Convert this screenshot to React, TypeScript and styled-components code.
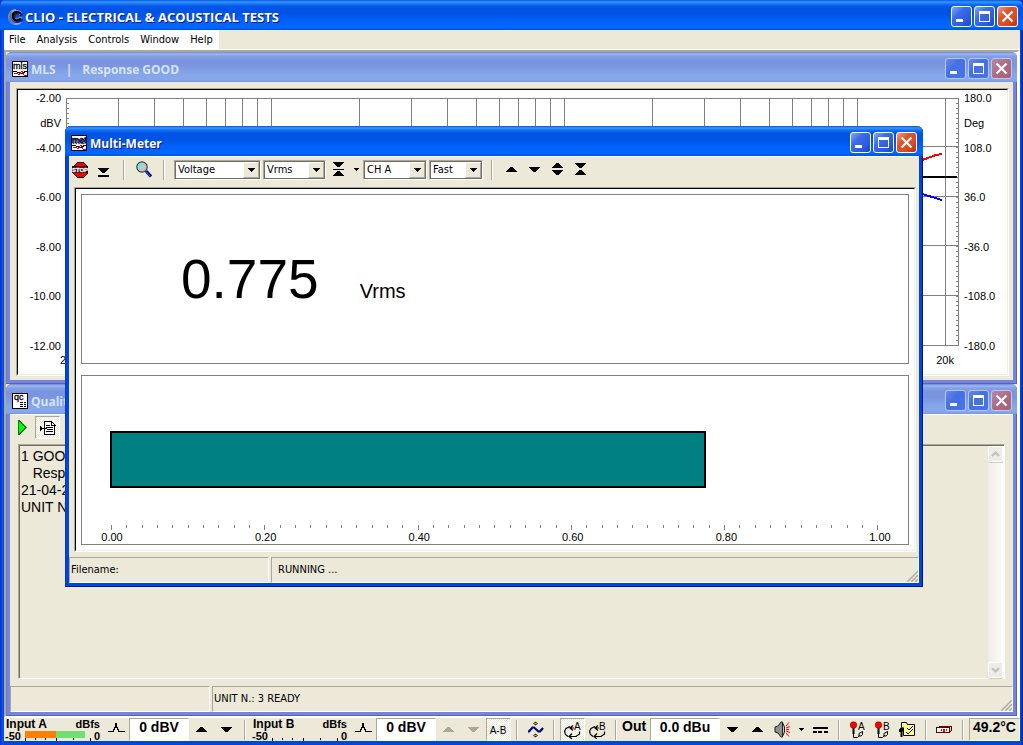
import React from "react";
import styled, { createGlobalStyle, css } from "styled-components";

const UI = `"DejaVu Sans Condensed", "Liberation Sans", sans-serif`;
const ARIAL = `"Liberation Sans", Arial, sans-serif`;
const TITLE = `"Open Sans", "Noto Sans", sans-serif`;
const FACE = "#ece9d8";
const SHADOW = "#aca899";

const Global = createGlobalStyle`
  *, *::before, *::after { box-sizing: border-box; }
  body { margin: 0; background: #0831d9; font: 11px/14px ${UI}; color: #000; }
  button, select, input, textarea { font: inherit; color: inherit; margin: 0; border-radius: 0; }
  svg { display: block; }
`;

/* ---------- window chrome ---------- */

const activeBar = css`
  background: linear-gradient(180deg, #0058e6 0, #3a95ff 2px, #1672f4 4px, #0054e6 7px, #0054e3 14px, #0062fb 21px, #0068ff 27px, #0054e0 30px);
  color: #fff;
  text-shadow: 1px 1px #0a1883;
`;
const inactiveBar = css`
  background: linear-gradient(180deg, #6f87d8 0, #9db9f0 2px, #84a0e6 4px, #7a94de 8px, #7b96e0 14px, #85a6ea 22px, #86a8ea 28px, #7b93e0 30px);
  color: #d8e4f8;
`;

const AppFrame = styled.main`
  display: flex;
  flex-direction: column;
  min-height: 100vh;
  min-width: 1000px;
  padding: 0 3px 4px 4px;
  background: linear-gradient(90deg, #0831d9 0, #0831d9 1px, #0855dd 2px, #0855e8 3px, #0046d8 4px, #0046d8 calc(100% - 2px), #001ea0 100%);
`;

const MdiFrame = styled.section<{ $active?: boolean; $grow?: boolean }>`
  display: flex;
  flex-direction: column;
  flex: ${(p) => (p.$grow ? "1" : "none")};
  padding: 0 4px 4px;
  border-radius: 6px 6px 0 0;
  background: ${(p) => (p.$active ? "#0046d8" : "#7585dc")};
  box-shadow: inset ${(p) => (p.$active ? "-1px -1px #00138c, inset 1px 0 #0831d9" : "-1px -1px #5a60c0, inset 1px 0 #6a78d0")};
`;

const FloatingFrame = styled(MdiFrame)`
  position: absolute;
  top: 74px;
  left: 59px;
  right: 94px;
`;

const Bar = styled.header<{ $active?: boolean; $main?: boolean }>`
  display: flex;
  align-items: center;
  gap: ${(p) => (p.$main ? "2px" : "3px")};
  height: 30px;
  margin: 0 ${(p) => (p.$main ? "-3px 0 -4px" : "-4px")};
  padding: 3px ${(p) => (p.$active && !p.$main ? "6px" : "5px")} 0 ${(p) => (p.$main ? "7px" : "6px")};
  border-radius: 6px 6px 0 0;
  ${(p) => (p.$active ? activeBar : inactiveBar)}
`;

const TitleText = styled.h1<{ $main?: boolean }>`
  display: flex;
  flex: 1;
  gap: 10px;
  margin: 0;
  padding-top: ${(p) => (p.$main ? 0 : 2)}px;
  font: 700 ${(p) => (p.$main ? 13 : 12)}px/18px ${TITLE};
  white-space: nowrap;
`;

const Captions = styled.div`
  display: flex;
  gap: 2px;
`;

const CaptionButton = styled.button<{ $close?: boolean; $active?: boolean }>`
  width: 21px;
  height: 21px;
  padding: 0;
  border: 1px solid ${(p) => (p.$active ? "#fff" : "#b9c8f2")};
  border-radius: 3px;
  background: ${(p) =>
    p.$close
      ? p.$active
        ? "linear-gradient(135deg, #f0a088 0, #e0532c 35%, #dc4a20 70%, #b83010 100%)"
        : "linear-gradient(135deg, #b888a8 0, #b06a80 50%, #a86078 100%)"
      : p.$active
        ? "linear-gradient(135deg, #86a8f4 0, #3c6ce8 35%, #2c5ce0 70%, #1c48c8 100%)"
        : "linear-gradient(135deg, #6a88e8 0, #4470e4 40%, #4474ec 100%)"};
`;

function CaptionButtons({ active }: { active?: boolean }) {
  return (
    <Captions>
      <CaptionButton $active={active} aria-label="Minimize">
        <svg width="19" height="19" shapeRendering="crispEdges"><path d="M4 12h7v3H4z" fill="#fff" /></svg>
      </CaptionButton>
      <CaptionButton $active={active} aria-label="Maximize">
        <svg width="19" height="19" shapeRendering="crispEdges"><path d="M4 4h11v11H4zM5 7v7h9V7z" fill="#fff" fillRule="evenodd" /></svg>
      </CaptionButton>
      <CaptionButton $close $active={active} aria-label="Close">
        <svg width="19" height="19"><path d="M4.500 4.500l10 10M14.500 4.500l-10 10" stroke="#fff" strokeWidth="2.200" /></svg>
      </CaptionButton>
    </Captions>
  );
}

/* ---------- menu ---------- */

const MenuStrip = styled.nav`
  display: flex;
  height: 20px;
  background: ${FACE};
  border-bottom: 1px solid #fff;
`;
const MenuItems = styled.div`
  display: flex;
  background: #fff;
`;
const MenuButton = styled.button`
  padding: 1px 6px 0 5px;
  border: 0;
  background: none;
`;

/* ---------- shared pieces ---------- */

const Desktop = styled.div`
  position: relative;
  display: flex;
  flex: 1;
  flex-direction: column;
  border: 1px solid;
  border-color: ${SHADOW} #fff #fff ${SHADOW};
  border-width: 2px 3px 1px 2px;
  background: ${FACE};
`;

const Client = styled.div<{ $line?: boolean }>`
  display: flex;
  flex: 1;
  flex-direction: column;
  background: ${FACE};
  border-top: ${(p) => (p.$line ? "1px solid #fff" : "0")};
`;

const Sunken = styled.div<{ $m: string }>`
  flex: 1;
  margin: ${(p) => p.$m};
  border: 1px solid;
  border-color: ${SHADOW} #fff #fff ${SHADOW};
  background: #fff;
`;
const SunkenInner = styled.div`
  height: 100%;
  border: 1px solid;
  border-color: #000 #f1efe2 #f1efe2 #000;
`;

const StatusRow = styled.footer`
  display: grid;
  grid-template-columns: 200px 1fr;
  grid-template-rows: 26px;
  gap: 2px;
`;
const StatusCell = styled.div<{ $pad?: number }>`
  position: relative;
  padding: 0 ${(p) => p.$pad ?? 1}px;
  border: 1px solid;
  border-color: ${SHADOW} #fff #fff ${SHADOW};
  line-height: 24px;
`;
const GripBox = styled.div`
  position: absolute;
  right: 0;
  bottom: 0;
`;
const Grip = () => (
  <GripBox>
    <svg width="12" height="12">
      <path d="M0 12L12 0M4 12L12 4M8 12L12 8" stroke="#fff" />
      <path d="M1 12L12 1M5 12L12 5M9 12L12 9" stroke="#aca899" strokeWidth="1.500" />
    </svg>
  </GripBox>
);

const Separator = styled.span`
  flex: none;
  width: 2px;
  height: 20px;
  margin: 0 5px;
  border-left: 1px solid ${SHADOW};
  border-right: 1px solid #fff;
`;

const ToolButton = styled.button<{ $w?: number; $pressed?: boolean }>`
  display: flex;
  flex: none;
  align-items: center;
  justify-content: center;
  width: ${(p) => p.$w ?? 25}px;
  height: 23px;
  padding: 0;
  border: 1px solid transparent;
  background: none;
  ${(p) =>
    p.$pressed &&
    css`
      border-color: ${SHADOW} #fff #fff ${SHADOW};
      background: repeating-conic-gradient(#fff 0 25%, ${FACE} 0 50%) 0 0 / 2px 2px;
    `}
`;

/* ---------- icons ---------- */

type IconProps = { w?: number; h?: number; children: React.ReactNode };
const Icon = ({ w = 16, h = 16, children }: IconProps) => (
  <svg width={w} height={h} viewBox={`0 0 ${w} ${h}`} shapeRendering="crispEdges" aria-hidden="true">
    {children}
  </svg>
);

const upPath = "h3v1h1v1h1v1h1v1h1v1h-11v-1h1v-1h1v-1h1v-1h1z";
const downPath = "h11v1h-1v1h-1v1h-1v1h-1v1h-3v-1h-1v-1h-1v-1h-1v-1h-1z";

const Up = ({ color = "#000" }: { color?: string }) => <Icon w={11} h={5}><path d={`M4 0${upPath}`} fill={color} /></Icon>;
const Down = ({ color = "#000" }: { color?: string }) => <Icon w={11} h={5}><path d={`M0 0${downPath}`} fill={color} /></Icon>;
const SmallDown = () => <Icon w={5} h={3}><path d="M0 0h5v1H4v1H3v1H2V2H1V1H0z" /></Icon>;
const Spread = () => <Icon w={11} h={13}><path d={`M4 0${upPath}M0 7${downPath}`} /></Icon>;
const Squeeze = () => <Icon w={11} h={13}><path d={`M0 0${downPath}M4 7${upPath}`} /></Icon>;
const Fit = () => <Icon w={11} h={15}><path d={`M0 0${downPath}M0 7h11v1H0zM4 9${upPath}`} /></Icon>;
const DropBar = () => <Icon w={11} h={14}><path d={`M0 5${downPath}M0 12h11v2H0z`} /></Icon>;

const Stop = () => (
  <Icon>
    <path d="M5 0h6l5 5v6l-5 5H5l-5-5V5z" fill="#000" />
    <path d="M5 1h6l4 4v6l-4 4H5l-4-4V5z" fill="#f00" />
    <path d="M0 4h16v7H0z" fill="#300000" />
    <text x="8" y="10" textAnchor="middle" fontSize="6" fontWeight="700" fontFamily={ARIAL} fill="#fff" stroke="#fff" strokeWidth="0.300">STOP</text>
  </Icon>
);
const Magnifier = () => (
  <svg width="16" height="17" viewBox="0 0 16 17" aria-hidden="true">
    <path d="M10 10l5 5.500" stroke="#000080" strokeWidth="3" />
    <path d="M10 10.500l4 4.500" stroke="#4a6ee0" strokeWidth="1" />
    <circle cx="6" cy="6" r="5.200" fill="#c0c8cc" stroke="#404040" strokeWidth="1.200" />
    <path d="M3 6c0-2 1-3 3-3" stroke="#3ff" strokeWidth="2" fill="none" />
  </svg>
);
const Logo = () => (
  <svg width="16" height="18" viewBox="0 0 16 18" aria-hidden="true">
    <path d="M9 2a7 7 0 1 0 5 12" stroke="#8aa8d8" strokeWidth="2" fill="none" />
    <path d="M5 4a7 7 0 0 0 2 12" stroke="#5a7ab8" strokeWidth="2" fill="none" />
    <text x="4" y="13" fontSize="15" fontWeight="700" fontFamily={ARIAL} stroke="#b0a070" strokeWidth="1.500" paintOrder="stroke">C</text>
  </svg>
);
const Frame16 = () => (
  <>
    <path d="M0 0h16v16H0z" />
    <path d="M1 1h14v14H1z" fill="#fff" />
  </>
);
const ModuleIcon = ({ label }: { label: string }) => (
  <Icon>
    <Frame16 />
    <text x="8" y="8" textAnchor="middle" fontSize="9" fontFamily={ARIAL} stroke="#000" strokeWidth="0.300">{label}</text>
    <path d="M1 10h4v1h3v1h2v-1h2v-1h3v1h-2v1h-2v1H8v-1H5v-1H1z" />
    <path d="M2 12h3l2 2 3-4 2 4h3" fill="none" stroke="#e00000" />
  </Icon>
);
const QcIcon = () => (
  <Icon>
    <Frame16 />
    <text x="2" y="7" fontSize="9" fontFamily={ARIAL} stroke="#000" strokeWidth="0.300">qc</text>
    <path d="M8 9h3v1H8zM12 9h2v1h-2zM8 11h3v1H8zM12 11h2v1h-2zM8 13h3v1H8zM12 13h2v1h-2z" />
  </Icon>
);
const Play = () => (
  <Icon w={9} h={15}><path d="M0 0h1l8 7v1l-8 7H0z" fill="#008000" /><path d="M1 2l6 5v1l-6 5z" fill="#0f0" /></Icon>
);
const Report = () => (
  <Icon>
    <path d="M4.500 1.500h7l3 3v10h-10z" fill="#fff" stroke="#000" />
    <path d="M11.500 1v4h4M6 5.500h4M6 7.500h7M7 9.500h6M6 11.500h7" fill="none" stroke="#000" />
    <path d="M0 6h1v1h1v1h5v1H2v1H1v1H0z" />
  </Icon>
);
const Peak = () => (
  <Icon w={17} h={16}><path d="M0 9.500h5.500V7.500h1V5.500h1V1M8.500 1v4.500h1v2h1v2H17" fill="none" stroke="#000" /></Icon>
);
const Diff = () => (
  <Icon w={19} h={10}><text x="9" y="9" textAnchor="middle" fontSize="10" fontFamily={ARIAL}>A-B</text></Icon>
);
const Wave = () => (
  <svg width="17" height="17" viewBox="0 0 17 17" aria-hidden="true">
    <path d="M1 10.500h1l3.500-4h1.500l4.500 4h1.500L16 7" fill="none" stroke="#000080" strokeWidth="2.200" />
    <path d="M8.500 0.500l2.500 2-2.500 2-2.500-2zM8.500 12.500l2.500 2-2.500 2-2.500-2z" fill="#303010" />
    <path d="M7.500 2.500h2M7.500 14.500h2" stroke="#e0d020" />
  </svg>
);
const Loop = ({ label }: { label: string }) => (
  <svg width="18" height="18" viewBox="0 0 18 18" aria-hidden="true">
    <path d="M9 4.500L6 7l3 2.500M6 7h4M6 5.500l-4 2-1.500 3 1 3L4 15.500M8 12.500l-3 3 3 2.500M5 15.500h7l3.500-2.500v-2.500" fill="none" stroke="#000" strokeWidth="1.200" />
    <text x="10" y="9" fontSize="10" fontFamily={ARIAL}>{label}</text>
  </svg>
);
const Speaker = () => (
  <svg width="17" height="17" viewBox="0 0 17 17" aria-hidden="true">
    <path d="M1 6l3-1 3-4h1.500v15H7L4 12l-3-1z" fill="#909090" stroke="#202020" />
    <path d="M8.500 1.500l2 4.500v5l-2 4.500z" fill="#c8c8c8" stroke="#202020" />
    <path d="M12 5l3-3.500M12 7l4-1.500M12 8.500h3M12 10l4 1.500M12 12l3 3.500" stroke="#f00" />
  </svg>
);
const Dc = () => <Icon w={15} h={6}><path d="M0 0h15v2H0zM0 4h4v2H0zM5 4h4v2H5zM11 4h4v2h-4z" /></Icon>;
const Mic = ({ label }: { label: string }) => (
  <svg width="17" height="18" viewBox="0 0 17 18" aria-hidden="true">
    <path d="M4.500 7v9.500h4l2-2M10 12.500l3.500-2v3l-1.500 1.500h-2z" fill="none" stroke="#000" />
    <path d="M3.500 7h2v6h-2z" />
    <circle cx="4.500" cy="4" r="3.300" fill="#f00" stroke="#700000" strokeWidth="0.500" />
    <text x="9" y="9" fontSize="10" fontFamily={ARIAL}>{label}</text>
  </svg>
);
const Settings = () => (
  <svg width="17" height="17" viewBox="0 0 17 17" aria-hidden="true">
    <path d="M2.500 6V1.500h5l1 2h7v11h-11V9z" fill="#ffff90" stroke="#000" />
    <path d="M8 7l2 2 4-4M7 11l2 2 5-5" fill="none" stroke="#000" />
    <path d="M0 8.500l2-2h3v4H3.500V16H1.500v-5H0z" />
  </svg>
);
const Device = () => (
  <Icon w={17} h={9}>
    <path d="M2.500 1.500h13v4l-2 2" fill="#d8c898" stroke="#600" />
    <path d="M0.500 2.500h13v5h-13z" fill="#fff" stroke="#600" />
    <path d="M5 4h1v2H5zM7 4h2v3H7zM10 4h1v2h-1z" fill="#e00000" />
  </Icon>
);

/* ---------- MLS chart ---------- */

const Plot = styled.div`
  display: grid;
  grid-template-columns: 48px 1fr 48px;
  height: 284px;
  font: 11px/14px ${ARIAL};
`;
const Scale = styled.div<{ $side: "left" | "right" }>`
  display: grid;
  grid-template-rows: repeat(11, 1fr);
  align-items: center;
  height: 272px;
  margin-top: -4px;
  padding: ${(p) => (p.$side === "left" ? "0 5px 0 0" : "0 0 0 5px")};
  text-align: ${(p) => (p.$side === "left" ? "right" : "left")};
`;
const PlotArea = styled.div`
  padding-top: 8px;
  svg { width: 100%; height: 248px; }
`;
const Frequencies = styled.div`
  display: flex;
  justify-content: space-between;
  margin: 7px 5px 0 -6px;
`;

const lines = [30, 40, 50, 60, 70, 80, 90, 100, 200, 300, 400, 500, 600, 700, 800, 900, 1000, 2000, 3000, 4000, 5000, 6000, 7000, 8000, 9000, 10000, 20000];
const freqX = (f: number) => Math.round(Math.log10(f / 20) * 293) + 0.5;

function MlsChart() {
  return (
    <Plot>
      <Scale $side="left">
        {["-2.00", "dBV", "-4.00", "", "-6.00", "", "-8.00", "", "-10.00", "", "-12.00"].map((t, i) => <span key={i}>{t}</span>)}
      </Scale>
      <PlotArea>
        <svg viewBox="0 0 893 248" preserveAspectRatio="none" shapeRendering="crispEdges" role="img" aria-label="Frequency response">
          <g stroke="#808080" fill="none">
            <path d="M0.500 0.500H892.500V247.500H0.500z" />
            {lines.map((f) => <path key={f} d={`M${freqX(f)} 0V248`} />)}
            {[1, 2, 3, 4].map((n) => <path key={n} d={`M0 ${Math.round(n * 49.4) - 0.5}H893`} />)}
            {Array.from({ length: 49 }, (_, n) => {
              const y = Math.round((n + 1) * 4.94) + 0.5;
              return <path key={n} d={`M0 ${y}h3M890 ${y}h3`} />;
            })}
          </g>
          <g fill="none" strokeWidth="2">
            <path d="M0 79H891" stroke="#000" />
            <path d="M600 90L856 62L862 60L870 57L876 56" stroke="#f00" />
            <path d="M600 70L856 96L866 99L876 102" stroke="#00f" />
          </g>
        </svg>
        <Frequencies><span>20</span><span>20k</span></Frequencies>
      </PlotArea>
      <Scale $side="right">
        {["180.0", "Deg", "108.0", "", "36.0", "", "-36.0", "", "-108.0", "", "-180.0"].map((t, i) => <span key={i}>{t}</span>)}
      </Scale>
    </Plot>
  );
}

/* ---------- Quality control ---------- */

const QcTools = styled.div`
  display: flex;
  align-items: flex-start;
  height: 29px;
  padding-top: 1px;
`;
const Memo = styled.div`
  display: flex;
  flex: 1;
  margin: 0 8px 7px 8px;
  border: 1px solid;
  border-color: ${SHADOW} #fff #fff ${SHADOW};
  box-shadow: inset 1px 1px #716f64;
`;
const MemoText = styled.textarea`
  flex: 1;
  padding: 3px 2px;
  border: 0;
  outline: 0;
  resize: none;
  overflow: hidden;
  background: none;
  font: 14px/17px ${ARIAL};
`;
const ScrollTrack = styled.div`
  display: flex;
  flex-direction: column;
  justify-content: space-between;
  width: 16px;
  margin: 1px 0 0;
  background: linear-gradient(90deg, #f0eee4, #fdfdfa);
`;
const ScrollButton = styled.button`
  display: flex;
  align-items: center;
  justify-content: center;
  width: 15px;
  height: 16px;
  padding: 0;
  border: 1px solid #fff;
  border-radius: 2px;
  background: #eeede5;
  box-shadow: 0 1px #d0cdbd;
`;
const Chevron = ({ d }: { d: string }) => (
  <svg width="9" height="6"><path d={d} fill="none" stroke="#c0bfb8" strokeWidth="2" /></svg>
);

/* ---------- Multi-Meter ---------- */

const MeterTools = styled.div`
  display: flex;
  align-items: center;
  height: 30px;
  padding: 0 0 5px;
`;
const Combo = styled.label<{ $w: number }>`
  position: relative;
  display: block;
  width: ${(p) => p.$w}px;
  height: 20px;
  margin-right: 2px;
  border: 1px solid;
  border-color: ${SHADOW} #fff #fff ${SHADOW};
  background: #fff;
  box-shadow: inset 1px 1px #716f64, inset -1px -1px #716f64;
  select {
    width: 100%;
    height: 18px;
    padding: 0 0 0 3px;
    border: 0;
    outline: 0;
    appearance: none;
    background: none;
  }
`;
const ComboArrow = styled.span`
  position: absolute;
  top: 1px;
  right: 1px;
  display: flex;
  align-items: center;
  justify-content: center;
  width: 16px;
  height: 16px;
  border: 1px solid;
  border-color: #fff ${SHADOW} ${SHADOW} #fff;
  background: ${FACE};
  pointer-events: none;
`;
const Gap = styled.span<{ $w: number }>`
  width: ${(p) => p.$w}px;
`;

function ComboBox({ label, value, w }: { label: string; value: string; w: number }) {
  return (
    <Combo $w={w}>
      <select aria-label={label} defaultValue={value}><option>{value}</option></select>
      <ComboArrow><Icon w={7} h={4}><path d="M0 0h7v1H6v1H5v1H4v1H3V3H2V2H1V1H0z" /></Icon></ComboArrow>
    </Combo>
  );
}

const Readouts = styled.div`
  display: grid;
  gap: 11px;
  padding: 5px;
`;
const Panel = styled.div`
  height: 170px;
  border: 1px solid #808080;
`;
const NumberPanel = styled(Panel)`
  display: flex;
  align-items: baseline;
  padding: 52px 0 0 99px;
  font-family: ${ARIAL};
`;
const Reading = styled.span`
  font-size: 55px;
  line-height: 64px;
`;
const Unit = styled.span`
  margin-left: 41px;
  font-size: 20px;
`;
const GaugePanel = styled(Panel)`
  padding: 55px 29px 0 28px;
`;
const GaugeBar = styled.div`
  height: 57px;
  border: 2px solid #000;
  background: #008080;
`;
const GaugeScale = styled.div`
  display: flex;
  justify-content: space-between;
  height: 5px;
  margin: 37px 0 0 1px;
`;
const Tick = styled.i<{ $major?: boolean }>`
  width: 1px;
  height: ${(p) => (p.$major ? 5 : 3)}px;
  background: #808080;
`;
const GaugeLabels = styled.div`
  display: flex;
  justify-content: space-between;
  margin: 0 -14px 0 -11px;
  font: 11px/14px ${ARIAL};
  span { width: 26px; text-align: center; }
`;

/* ---------- bottom bar ---------- */

const BottomBar = styled.footer`
  display: flex;
  align-items: center;
  height: 24px;
  border-top: 1px solid #fff;
  background: ${FACE};
`;
const Channel = styled.div`
  flex: none;
  width: 100px;
  height: 23px;
  padding: 0 4px 0 1px;
  font: 700 12px/13px ${ARIAL};
`;
const ChannelTop = styled.div`
  display: flex;
  justify-content: space-between;
  padding-left: 1px;
  small { font-size: 11px; }
`;
const ChannelLevel = styled.div`
  display: grid;
  grid-template-columns: 20px 69px auto;
  font-size: 11px;
  line-height: 11px;
`;
const Value = styled.output<{ $w?: number }>`
  flex: ${(p) => (p.$w ? "none" : "1")};
  width: ${(p) => (p.$w ? `${p.$w}px` : "auto")};
  height: 23px;
  border: 1px solid;
  border-color: ${SHADOW} #fff #fff ${SHADOW};
  background: ${(p) => (p.$w ? "#fff" : "none")};
  font: 700 14px/17px ${ARIAL};
  text-align: center;
  white-space: nowrap;
`;
const OutLabel = styled.label`
  width: 28px;
  height: 23px;
  font: 700 14px/17px ${ARIAL};
`;

function InputMeter({ name, live }: { name: string; live?: boolean }) {
  return (
    <>
      <Channel>
        <ChannelTop><span>{name}</span><small>dBfs</small></ChannelTop>
        <ChannelLevel>
          <span>-50</span>
          <Icon w={68} h={10}>
            {live && <path d="M0 0h31v7H0z" fill="#ff8000" />}
            {live && <path d="M31 0h29v7H31z" fill="#70e070" />}
            <path d="M0 7h1v3H0zM10 7h1v2h-1zM20 7h1v2h-1zM31 7h1v3h-1zM48 7h1v2h-1zM65 7h1v3h-1z" />
          </Icon>
          <span>0</span>
        </ChannelLevel>
      </Channel>
      <ToolButton aria-label={`${name} peak`}><Peak /></ToolButton>
      <Value $w={60}>0 dBV</Value>
    </>
  );
}

/* ---------- page ---------- */

export default function App() {
  return (
    <AppFrame>
      <Global />
      <Bar $active $main>
        <Logo />
        <TitleText $main>CLIO - ELECTRICAL &amp; ACOUSTICAL TESTS</TitleText>
        <CaptionButtons active />
      </Bar>
      <MenuStrip>
        <MenuItems>
          {["File", "Analysis", "Controls", "Window", "Help"].map((m) => <MenuButton key={m}>{m}</MenuButton>)}
        </MenuItems>
      </MenuStrip>

      <Desktop>
        <MdiFrame>
          <Bar>
            <ModuleIcon label="mls" />
            <TitleText><span>MLS</span><span>|</span><span>Response GOOD</span></TitleText>
            <CaptionButtons />
          </Bar>
          <Client>
            <Sunken $m="6px 4px 4px 6px"><SunkenInner><MlsChart /></SunkenInner></Sunken>
          </Client>
        </MdiFrame>

        <MdiFrame $grow>
          <Bar>
            <QcIcon />
            <TitleText>Quality Control</TitleText>
            <CaptionButtons />
          </Bar>
          <Client $line>
            <QcTools>
              <ToolButton aria-label="Run"><Play /></ToolButton>
              <ToolButton $pressed aria-label="Report"><Report /></ToolButton>
              <ToolButton aria-label="Save"><Report /></ToolButton>
            </QcTools>
            <Memo>
              <MemoText readOnly aria-label="Results" value={"1 GOOD\n   Response GOOD\n21-04-2005\nUNIT N. 2"} />
              <ScrollTrack>
                <ScrollButton disabled aria-label="Scroll up"><Chevron d="M1 5l3.500-3.500L8 5" /></ScrollButton>
                <ScrollButton disabled aria-label="Scroll down"><Chevron d="M1 1l3.500 3.500L8 1" /></ScrollButton>
              </ScrollTrack>
            </Memo>
            <StatusRow>
              <StatusCell />
              <StatusCell>UNIT N.: 3 READY<Grip /></StatusCell>
            </StatusRow>
          </Client>
        </MdiFrame>

        <FloatingFrame $active>
          <Bar $active>
            <ModuleIcon label="met" />
            <TitleText>Multi-Meter</TitleText>
            <CaptionButtons active />
          </Bar>
          <Client $line>
            <MeterTools>
              <ToolButton $w={22} aria-label="Stop"><Stop /></ToolButton>
              <ToolButton $w={24} aria-label="Options"><DropBar /></ToolButton>
              <Gap $w={3} />
              <Separator />
              <ToolButton $w={28} aria-label="Zoom"><Magnifier /></ToolButton>
              <Separator />
              <Gap $w={4} />
              <ComboBox label="Quantity" value="Voltage" w={87} />
              <ComboBox label="Unit" value="Vrms" w={63} />
              <ToolButton $w={21} aria-label="Reference"><Fit /></ToolButton>
              <ToolButton $w={14} aria-label="Reference menu"><SmallDown /></ToolButton>
              <ComboBox label="Channel" value="CH A" w={64} />
              <ComboBox label="Speed" value="Fast" w={54} />
              <Gap $w={1} />
              <Separator />
              <Gap $w={2} />
              <ToolButton $w={23} aria-label="Range up"><Up /></ToolButton>
              <ToolButton $w={23} aria-label="Range down"><Down /></ToolButton>
              <ToolButton $w={23} aria-label="Expand"><Spread /></ToolButton>
              <ToolButton $w={23} aria-label="Compress"><Squeeze /></ToolButton>
            </MeterTools>
            <Sunken $m="0 3px 5px 5px">
              <SunkenInner>
                <Readouts>
                  <NumberPanel><Reading>0.775</Reading><Unit>Vrms</Unit></NumberPanel>
                  <GaugePanel>
                    <GaugeBar style={{ width: `${0.775 * 100}%` }} />
                    <GaugeScale>
                      {Array.from({ length: 51 }, (_, i) => <Tick key={i} $major={i % 10 === 0} />)}
                    </GaugeScale>
                    <GaugeLabels>
                      {["0.00", "0.20", "0.40", "0.60", "0.80", "1.00"].map((t) => <span key={t}>{t}</span>)}
                    </GaugeLabels>
                  </GaugePanel>
                </Readouts>
              </SunkenInner>
            </Sunken>
            <StatusRow>
              <StatusCell>Filename:</StatusCell>
              <StatusCell $pad={6}>RUNNING ...<Grip /></StatusCell>
            </StatusRow>
          </Client>
        </FloatingFrame>
      </Desktop>

      <BottomBar>
        <InputMeter name="Input A" live />
        <ToolButton aria-label="Input A up"><Up /></ToolButton>
        <ToolButton aria-label="Input A down"><Down /></ToolButton>
        <Separator />
        <InputMeter name="Input B" />
        <ToolButton disabled aria-label="Input B up"><Up color={SHADOW} /></ToolButton>
        <ToolButton disabled aria-label="Input B down"><Down color={SHADOW} /></ToolButton>
        <ToolButton $pressed aria-label="A minus B"><Diff /></ToolButton>
        <Separator />
        <ToolButton aria-label="Autorange"><Wave /></ToolButton>
        <Separator />
        <ToolButton $pressed aria-label="Loop A"><Loop label="A" /></ToolButton>
        <ToolButton aria-label="Loop B"><Loop label="B" /></ToolButton>
        <Separator />
        <OutLabel htmlFor="out">Out</OutLabel>
        <Value id="out" $w={70}>0.0 dBu</Value>
        <ToolButton aria-label="Output down"><Down /></ToolButton>
        <ToolButton aria-label="Output up"><Up /></ToolButton>
        <ToolButton aria-label="Generator"><Speaker /></ToolButton>
        <ToolButton $w={13} aria-label="Generator menu"><SmallDown /></ToolButton>
        <ToolButton aria-label="DC"><Dc /></ToolButton>
        <Separator />
        <ToolButton aria-label="Microphone A"><Mic label="A" /></ToolButton>
        <ToolButton aria-label="Microphone B"><Mic label="B" /></ToolButton>
        <ToolButton aria-label="Settings"><Settings /></ToolButton>
        <Separator />
        <ToolButton aria-label="Device"><Device /></ToolButton>
        <Separator />
        <Value>49.2°C</Value>
      </BottomBar>
    </AppFrame>
  );
}
